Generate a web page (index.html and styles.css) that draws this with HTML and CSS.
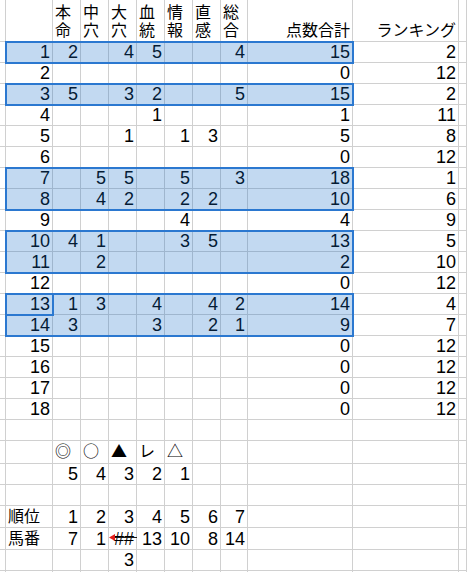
FILE: index.html
```html
<!DOCTYPE html>
<html>
<head>
<meta charset="utf-8">
<title>ランキング</title>
<link rel="stylesheet" href="styles.css">
</head>
<body>
<table class="sheet">
	<colgroup>
		<col class="c-edge"><col class="c-no">
		<col class="c-mark"><col class="c-mark"><col class="c-mark"><col class="c-mark"><col class="c-mark"><col class="c-mark"><col class="c-last">
		<col class="c-total"><col class="c-rank"><col class="c-rest">
	</colgroup>
	<tr class="head"><td></td><td></td><td class="jp">本<br>命</td><td class="jp">中<br>穴</td><td class="jp">大<br>穴</td><td class="jp">血<br>統</td><td class="jp">情<br>報</td><td class="jp">直<br>感</td><td class="jp">総<br>合</td><td class="jp r">点数合計</td><td class="jp r">ランキング</td><td></td></tr>
	<tr><td></td><td class="anchor"><div class="sel"></div>1</td><td>2</td><td></td><td>4</td><td>5</td><td></td><td></td><td>4</td><td>15</td><td>2</td><td></td></tr>
	<tr><td></td><td>2</td><td></td><td></td><td></td><td></td><td></td><td></td><td></td><td>0</td><td>12</td><td></td></tr>
	<tr><td></td><td class="anchor"><div class="sel"></div>3</td><td>5</td><td></td><td>3</td><td>2</td><td></td><td></td><td>5</td><td>15</td><td>2</td><td></td></tr>
	<tr><td></td><td>4</td><td></td><td></td><td></td><td>1</td><td></td><td></td><td></td><td>1</td><td>11</td><td></td></tr>
	<tr><td></td><td>5</td><td></td><td></td><td>1</td><td></td><td>1</td><td>3</td><td></td><td>5</td><td>8</td><td></td></tr>
	<tr><td></td><td>6</td><td></td><td></td><td></td><td></td><td></td><td></td><td></td><td>0</td><td>12</td><td></td></tr>
	<tr><td></td><td class="anchor"><div class="sel two"></div>7</td><td></td><td>5</td><td>5</td><td></td><td>5</td><td></td><td>3</td><td>18</td><td>1</td><td></td></tr>
	<tr><td></td><td>8</td><td></td><td>4</td><td>2</td><td></td><td>2</td><td>2</td><td></td><td>10</td><td>6</td><td></td></tr>
	<tr><td></td><td>9</td><td></td><td></td><td></td><td></td><td>4</td><td></td><td></td><td>4</td><td>9</td><td></td></tr>
	<tr><td></td><td class="anchor"><div class="sel two"></div>10</td><td>4</td><td>1</td><td></td><td></td><td>3</td><td>5</td><td></td><td>13</td><td>5</td><td></td></tr>
	<tr><td></td><td>11</td><td></td><td>2</td><td></td><td></td><td></td><td></td><td></td><td>2</td><td>10</td><td></td></tr>
	<tr><td></td><td>12</td><td></td><td></td><td></td><td></td><td></td><td></td><td></td><td>0</td><td>12</td><td></td></tr>
	<tr><td></td><td class="anchor"><div class="sel two"></div><div class="active"></div>13</td><td>1</td><td>3</td><td></td><td>4</td><td></td><td>4</td><td>2</td><td>14</td><td>4</td><td></td></tr>
	<tr><td></td><td>14</td><td>3</td><td></td><td></td><td>3</td><td></td><td>2</td><td>1</td><td>9</td><td>7</td><td></td></tr>
	<tr><td></td><td>15</td><td></td><td></td><td></td><td></td><td></td><td></td><td></td><td>0</td><td>12</td><td></td></tr>
	<tr><td></td><td>16</td><td></td><td></td><td></td><td></td><td></td><td></td><td></td><td>0</td><td>12</td><td></td></tr>
	<tr><td></td><td>17</td><td></td><td></td><td></td><td></td><td></td><td></td><td></td><td>0</td><td>12</td><td></td></tr>
	<tr><td></td><td>18</td><td></td><td></td><td></td><td></td><td></td><td></td><td></td><td>0</td><td>12</td><td></td></tr>
	<tr><td></td><td></td><td></td><td></td><td></td><td></td><td></td><td></td><td></td><td></td><td></td><td></td></tr>
	<tr class="marks"><td></td><td></td><td class="jp">◎</td><td class="jp">○</td><td class="jp">▲</td><td class="jp">レ</td><td class="jp">△</td><td></td><td></td><td></td><td></td><td></td></tr>
	<tr><td></td><td></td><td>5</td><td>4</td><td>3</td><td>2</td><td>1</td><td></td><td></td><td></td><td></td><td></td></tr>
	<tr><td></td><td></td><td></td><td></td><td></td><td></td><td></td><td></td><td></td><td></td><td></td><td></td></tr>
	<tr><td></td><td class="jp">順位</td><td>1</td><td>2</td><td>3</td><td>4</td><td>5</td><td>6</td><td>7</td><td></td><td></td><td></td></tr>
	<tr><td></td><td class="jp">馬番</td><td>7</td><td>1</td><td class="trace">##<svg class="arrow" width="28" height="20" viewBox="0 0 28 20"><path d="M4 9.5H28" stroke="#1b1b1b"/><path d="M0 9.5L6 6V13Z" fill="#e3201b"/></svg></td><td>13</td><td>10</td><td>8</td><td>14</td><td></td><td></td><td></td></tr>
	<tr><td></td><td></td><td></td><td></td><td>3</td><td></td><td></td><td></td><td></td><td></td><td></td><td></td></tr>
	<tr><td></td><td></td><td></td><td></td><td></td><td></td><td></td><td></td><td></td><td></td><td></td><td></td></tr>
</table>
</body>
</html>
```

FILE: styles.css
```css
html, body{
	margin:0;
	overflow:hidden;
	background-color:#fff;
}
.sheet{
	border-collapse:separate;
	border-spacing:0;
	table-layout:fixed;
	width:467px;
	font-family:"Liberation Sans", "Noto Sans CJK JP", sans-serif;
	font-size:18px;
	color:#000;
}
/* column widths, gridline included */
.c-edge{ width:6px; }
.c-no{ width:47px; }
.c-mark{ width:28px; }
.c-last{ width:27px; }
.c-total{ width:105px; }
.c-rank{ width:106px; }
.c-rest{ width:8px; }

.sheet tr{
	height:21px;
}
.sheet td{
	border-right:1px solid #d0d0d0;
	border-bottom:1px solid #d0d0d0;
	padding:0 2px;
	line-height:19px;
	text-align:right;
	vertical-align:bottom;
	white-space:nowrap;
}
.sheet td.jp{
	font-family:"Noto Sans CJK JP", sans-serif;
	font-size:16px;
	text-align:left;
	padding-bottom:2px;
}
.sheet td.r{
	text-align:right;
}
.sheet tr.head{
	height:42px;
}
.sheet .head td{
	line-height:18px;
	padding-bottom:3px;
}
.sheet .marks td{
	padding-bottom:3px;
}

/* selected ranges */
.anchor{
	position:relative;
}
.sel{
	position:absolute;
	left:-1px;
	top:-1px;
	width:349px;
	height:23px;
	box-sizing:border-box;
	border:2px solid #2b78d0;
	background-color:rgba(20, 110, 200, 0.26);
}
.sel.two{
	height:44px;
}
.active{
	position:absolute;
	left:-1px;
	top:-1px;
	width:49px;
	height:23px;
	box-sizing:border-box;
	border:2px solid #2b78d0;
}

/* trace arrow over the ## cell */
.trace{
	position:relative;
}
.arrow{
	position:absolute;
	left:0;
	top:0;
}
```
